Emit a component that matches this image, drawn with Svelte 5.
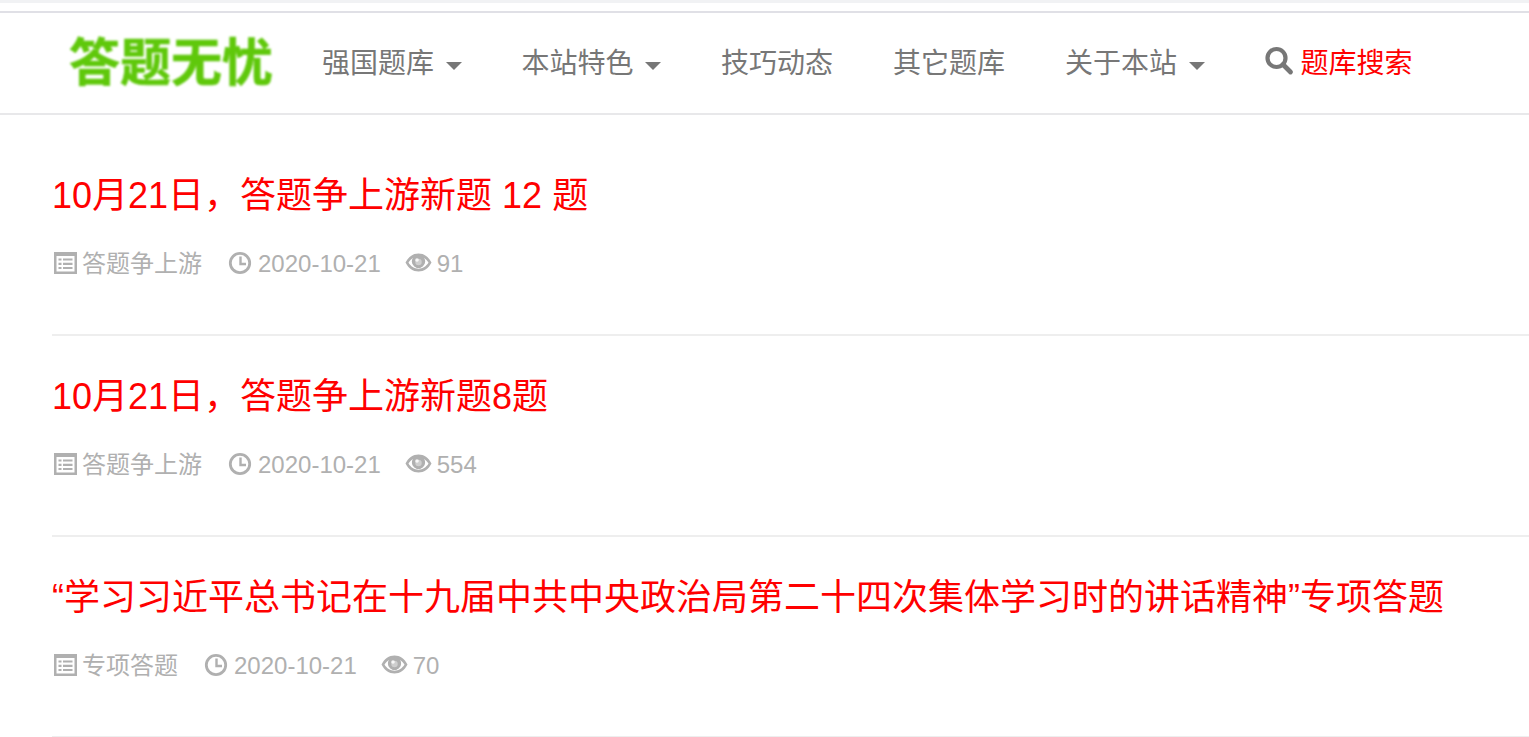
<script>
  const nav = [
    { label: '强国题库', caret: true },
    { label: '本站特色', caret: true },
    { label: '技巧动态' },
    { label: '其它题库' },
    { label: '关于本站', caret: true }
  ];

  const posts = [
    { title: '10月21日，答题争上游新题 12 题', cat: '答题争上游', date: '2020-10-21', views: 91 },
    { title: '10月21日，答题争上游新题8题', cat: '答题争上游', date: '2020-10-21', views: 554 },
    { title: '“学习习近平总书记在十九届中共中央政治局第二十四次集体学习时的讲话精神”专项答题', cat: '专项答题', date: '2020-10-21', views: 70 }
  ];
</script>

<div class="page">
  <div class="topstrip"></div>
  <header class="navbar">
    <a class="logo" href="#top">答题无忧</a>
    <nav>
      {#each nav as item}
        <a class="nav-item" href="#top">
          {item.label}
          {#if item.caret}<span class="caret"></span>{/if}
        </a>
      {/each}
      <a class="nav-item search" href="#top">
        <svg width="30" height="30" viewBox="0 0 30 30" fill="none" stroke="#777" aria-hidden="true">
          <circle cx="12.5" cy="12" r="9" stroke-width="4.2" />
          <path d="M19 18.500l7.500 7.500" stroke-width="4.800" stroke-linecap="round" />
        </svg>
        <span class="search-text">题库搜索</span>
      </a>
    </nav>
  </header>

  <main>
    {#each posts as post}
      <article>
        <h2><a href="#top">{post.title}</a></h2>
        <div class="meta">
          <span class="meta-item list">
            <svg width="23" height="24" viewBox="0 0 23 24" aria-hidden="true">
              <path fill="#b0b0b0" fill-rule="evenodd" d="M0 1h23v22H0zM2.500 5v15.500h18V5z" />
              <path stroke="#b0b0b0" stroke-width="2.200" d="M4.500 8.500h3M9 8.500h9.500M4.500 12.800h3M9 12.800h9.500M4.500 17h3M9 17h9.500" />
            </svg>
            {post.cat}
          </span>
          <span class="meta-item">
            <svg width="24" height="24" viewBox="0 0 24 24" fill="none" stroke="#b0b0b0" aria-hidden="true">
              <circle cx="12" cy="12" r="9.700" stroke-width="2.800" />
              <path d="M12.500 5.500v7.500h-5.500" stroke-width="2.400" transform="matrix(-1 0 0 1 25 0)" />
            </svg>
            {post.date}
          </span>
          <span class="meta-item eye">
            <svg width="27" height="24" viewBox="0 0 27 24" aria-hidden="true">
              <path fill="#b0b0b0" fill-rule="evenodd" d="M0.500 11.500C3.500 5.500 8 2.500 13.500 2.500s10 3 13 9c-3 6-7.500 9-13 9s-10-3-13-9zM3.500 11.500c2.300 3.900 5.800 6.200 10 6.200s7.700-2.300 10-6.200c-1.200-2-2.700-3.500-4.400-4.600a6.500 6.500 0 1 1-11.200 0c-1.700 1.100-3.200 2.600-4.400 4.600z" />
              <path fill="#b0b0b0" d="M13.500 4.500c-2 0-3.500 1.200-5 2.200a6 6 0 0 0-1 4c0 3.500 2.800 6.300 6 6.300s6-2.800 6-6.300a6 6 0 0 0-1-4c-1.500-1-3-2.200-5-2.200z" />
              <circle cx="13.500" cy="11" r="3.200" fill="#fff" opacity="0.4" />
              <circle cx="12" cy="9" r="1.800" fill="#fff" opacity="0.85" />
            </svg>
            {post.views}
          </span>
        </div>
      </article>
    {/each}
  </main>
</div>

<style>
  :global(body) {
    background: #fff;
    font-family: "Liberation Sans", "Noto Sans CJK SC", sans-serif;
    overflow: hidden;
  }

  a {
    text-decoration: none;
    color: inherit;
  }

  .page {
    height: 737px;
    overflow: hidden;
  }

  .topstrip {
    height: 3px;
    background: #f1f2f4;
    margin-bottom: 8px;
  }

  .navbar {
    display: flex;
    align-items: center;
    height: 100px;
    border-top: 2px solid #e0e0e6;
    border-bottom: 2px solid #e8e8ea;
  }

  .logo {
    margin-left: 69px;
    width: 204px;
    font-size: 51px;
    line-height: 1;
    font-weight: 700;
    color: #5fc80b;
    white-space: nowrap;
    filter: blur(0.8px);
    -webkit-text-stroke: 0.6px #5fc80b;
  }

  nav {
    display: flex;
    margin-left: 49px;
    gap: 60px;
    padding-top: 2px;
  }

  .nav-item {
    display: flex;
    align-items: center;
    font-size: 28px;
    line-height: 40px;
    color: #777;
    white-space: nowrap;
  }

  .caret {
    width: 0;
    height: 0;
    margin-left: 11.5px;
    margin-top: 3px;
    border-top: 8px solid #777;
    border-left: 8px solid transparent;
    border-right: 8px solid transparent;
  }

  .search svg {
    margin-top: -7px;
    margin-left: -1px;
  }

  .search-text {
    color: #f00;
    margin-left: 7px;
  }

  main {
    margin-left: 52px;
    padding-top: 20px;
  }

  article {
    height: 163px;
    border-bottom: 2px solid #eeeeee;
    padding-top: 36px;
  }

  h2 {
    margin: 0;
    font-size: 36px;
    line-height: 50px;
    font-weight: 400;
    color: #f00;
    white-space: nowrap;
  }

  .meta {
    display: flex;
    gap: 26px;
    margin-top: 26px;
    font-size: 24px;
    line-height: 34px;
    color: #b0b0b0;
  }

  .meta-item {
    display: flex;
    align-items: center;
    gap: 6px;
  }

  .meta-item svg {
    margin-top: -3px;
  }

  .list {
    margin-left: 2px;
    gap: 5px;
  }

  .eye {
    gap: 5px;
    margin-left: -2px;
  }
</style>
